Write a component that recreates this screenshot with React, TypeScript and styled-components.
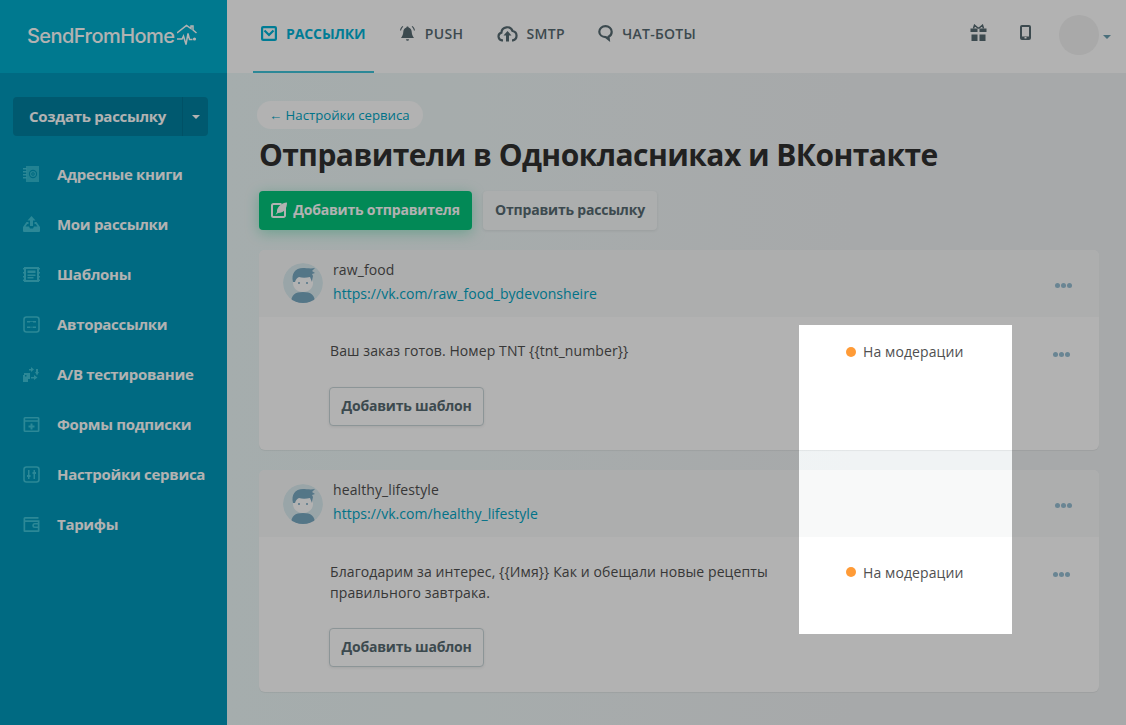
import React from "react";
import styled, { createGlobalStyle } from "styled-components";

const GlobalStyle = createGlobalStyle`
  html, body {
    margin: 0;
    height: 100%;
    overflow: hidden;
    background: #f0f3f4;
    font-family: "Open Sans", "Noto Sans", sans-serif;
  }
  * { box-sizing: border-box; }
`;

const SIDE_ICON = "#3fc3d8";
const NAV_ICON = "#576a71";

const MailIcon = () => (
  <svg width="16" height="15" viewBox="0 0 16 15" fill="none" stroke="#00b2d6" strokeWidth="2.200">
    <rect x="1.100" y="1.100" width="13.800" height="12.800" rx="1" />
    <path d="M3.500 4.500 8 9l4.500-4.500" />
  </svg>
);
const BellIcon = () => (
  <svg width="17" height="18" viewBox="0 0 17 18" fill={NAV_ICON}>
    <path d="M8.500 1.500c.8 0 1.100.5 1.100 1 2.200.6 3 2.400 3.100 4.300.1 2.500.8 4.300 2.300 6.200H2c1.500-1.900 2.200-3.700 2.300-6.200.1-1.900.9-3.700 3.100-4.300 0-.5.300-1 1.100-1z" />
    <path d="M7 14.300h3a1.500 1.500 0 0 1-3 0zM3.500 1l.8.700C3.100 2.800 2.300 4 2.100 5.600L1 5.500C1.200 3.700 2.100 2.100 3.500 1zM13.500 1l-.8.700c1.200 1.100 2 2.300 2.200 3.900l1.100-.1c-.2-1.800-1.100-3.400-2.500-4.500z" />
  </svg>
);
const CloudIcon = () => (
  <svg width="21" height="17" viewBox="0 0 21 17">
    <path fill="none" stroke={NAV_ICON} strokeWidth="2.200" d="M6 15.400H5a4 4 0 0 1-.6-7.800A5.800 5.800 0 0 1 15.600 6a4.800 4.800 0 0 1 .2 9.400H15" />
    <path fill={NAV_ICON} d="M10.500 6l4 4.500H12V16.500H9v-6H6.500z" />
  </svg>
);
const ChatIcon = () => (
  <svg width="15" height="17" viewBox="0 0 15 17">
    <path fill="none" stroke={NAV_ICON} strokeWidth="2.200" d="M7.500 1.200c3.400 0 6.200 2.400 6.200 5.500 0 2.300-1.200 4.100-3.200 5l.3 2.800-3-2.400C4 12 1.300 9.800 1.300 6.700c0-3.100 2.800-5.500 6.200-5.500z" />
  </svg>
);
const GiftIcon = () => (
  <svg width="17" height="17" viewBox="0 0 17 17" fill={NAV_ICON}>
    <path fill="none" stroke={NAV_ICON} strokeWidth="1.500" d="M8.500 4.500 4.500 1.200 3.500 4.500M8.500 4.500l4-3.300 1 3.300" />
    <path d="M.5 4.500h7v3.500h-7zM9.500 4.500h7v3.500h-7zM1.500 10.500h6V17h-6zM9.500 10.500h6V17h-6z" />
  </svg>
);
const PhoneIcon = () => (
  <svg width="11" height="15" viewBox="0 0 11 15">
    <path fill={NAV_ICON} fillRule="evenodd" d="M2 0h7a2 2 0 0 1 2 2v11a2 2 0 0 1-2 2H2a2 2 0 0 1-2-2V2a2 2 0 0 1 2-2zm0 2v9.500h7V2zm2.500 10v1.500h2V12z" />
  </svg>
);

const sideIcons: Record<string, React.ReactNode> = {
  book: (
    <>
      <path d="M3 0h13v16H3z" opacity=".8" />
      <path d="M0 2h4v1.500H0zM0 5h4v1.500H0zM0 8h4v1.500H0zM0 11h4v1.500H0z" />
      <circle cx="10" cy="8" r="3.600" fill="none" stroke="#0099ba" strokeWidth="1.100" />
      <circle cx="10" cy="8" r="1.300" fill="none" stroke="#0099ba" strokeWidth="1" />
    </>
  ),
  outbox: (
    <path d="M8.500 0l4 4.500H10V10H7V4.500H4.500zM3.500 6H5.500v2H4.300L2.500 10.500H6l1 2h3l1-2h3.500L12.700 8H11.500V6h2L17 11v4a1 1 0 0 1-1 1H1a1 1 0 0 1-1-1v-4z" />
  ),
  template: (
    <path fillRule="evenodd" d="M1 1h15v15H1zM3 3v11h11V3zM4.500 4.500h8V7h-8zM4.500 8.500h8V10h-8zM4.500 11h6v1.500h-6zM0 2h1v1.500H0zM0 6h1v1.500H0zM0 10h1v1.500H0zM0 13.500h1V15H0zM16 2h1v1.500h-1zM16 6h1v1.500h-1zM16 10h1v1.500h-1zM16 13.500h1V15h-1z" />
  ),
  auto: (
    <>
      <rect x="1" y="1" width="15" height="15" rx="2.500" fill="none" stroke={SIDE_ICON} strokeWidth="1.600" />
      <path d="M4 5h3v1.500H4zM10 5h3v1.500h-3zM4 10.500h3V12H4zM10 10.500h3V12h-3zM7 5.300h3v.8H7zM7 10.800h3v.8H7z" />
    </>
  ),
  ab: (
    <path d="M1 7h6v6H5v3H0V9h1zm1 2v1.500h1.500V9zM8 1l3 2.500L8 6V4.500H6V3h2zm4 5 4 0-2 3.500zM13 6V3h2v3zM8 11h3V9l3.500 2.500L11 14v-1.500H8z" />
  ),
  form: (
    <path fillRule="evenodd" d="M2 1h13a1.500 1.500 0 0 1 1.500 1.500v12A1.500 1.500 0 0 1 15 16H2a1.500 1.500 0 0 1-1.500-1.500v-12A1.500 1.500 0 0 1 2 1zm.2 1.600v1.600h12.600V2.600zm0 3.200v8.600h12.600V5.800zM7.500 7.500h2v2h2v2h-2v2h-2v-2h-2v-2h2z" />
  ),
  settings: (
    <>
      <rect x="1" y="1" width="15" height="15" rx="2.500" fill="none" stroke={SIDE_ICON} strokeWidth="1.600" />
      <path d="M5 4h1.500v9H5zM10.500 4H12v9h-1.500zM4 9h3.500v2H4zM9.500 6H13v2H9.500z" />
    </>
  ),
  wallet: (
    <path fillRule="evenodd" d="M2 1h13.500v1.700H2.200v1.600H16.500V15a1 1 0 0 1-1 1H1.500a1 1 0 0 1-1-1V2.500A1.500 1.500 0 0 1 2 1zm.2 5v8.300h12.600v-2.300h-3a2.500 2.500 0 0 1 0-5h3V6zm9.600 2.600a.9.900 0 0 0 0 1.800h3V8.600z" />
  ),
};

const menu = [
  { icon: "book", label: "Адресные книги" },
  { icon: "outbox", label: "Мои рассылки" },
  { icon: "template", label: "Шаблоны" },
  { icon: "auto", label: "Авторассылки" },
  { icon: "ab", label: "A/B тестирование" },
  { icon: "form", label: "Формы подписки" },
  { icon: "settings", label: "Настройки сервиса" },
  { icon: "wallet", label: "Тарифы" },
];

const senders = [
  {
    name: "raw_food",
    url: "https://vk.com/raw_food_bydevonsheire",
    text: "Ваш заказ готов. Номер TNT {{tnt_number}}",
  },
  {
    name: "healthy_lifestyle",
    url: "https://vk.com/healthy_lifestyle",
    text: "Благодарим за интерес, {{Имя}} Как и обещали новые рецепты правильного завтрака.",
  },
];

const SenderAvatar = () => (
  <svg width="40" height="40" viewBox="0 0 40 40">
    <clipPath id="avatar-clip"><circle cx="20" cy="20" r="20" /></clipPath>
    <g clipPath="url(#avatar-clip)">
      <circle cx="20" cy="20" r="20" fill="#dcedf1" />
      <path d="M8 40c0-8 4-11 12-11s12 3 12 11z" fill="#79a9c2" />
      <path d="M10 13h20v7c0 5-4 9-10 9s-10-4-10-9z" fill="#fff" />
      <path d="M10 19C8 11 12 5 20 5c3 0 8 1 12 0l-3 3 3 2-3 1 1 2-1 6-2-5c-4 1-8 1-11 0-2 1-3 2-4 5z" fill="#79a9c2" />
      <circle cx="16" cy="20" r="1" fill="#79a9c2" />
      <circle cx="24" cy="20" r="1" fill="#79a9c2" />
    </g>
  </svg>
);

const EditIcon = () => (
  <svg width="16" height="16" viewBox="0 0 16 16">
    <path fill="none" stroke="#fff" strokeWidth="2" d="M10.500 2H2.500A1.500 1.500 0 0 0 1 3.500v10A1.500 1.500 0 0 0 2.500 15h10a1.500 1.500 0 0 0 1.500-1.500V6" />
    <path fill="#fff" d="M16 .5c0 6-3 10.500-9 10.500l-2.500 2 1.500-3C5.500 5.500 10 1 16 .5z" />
  </svg>
);

const App: React.FC = () => {
  return (
    <Shell>
      <GlobalStyle />
      <Sidebar>
        <LogoBar>
          <LogoText>SendFromHome</LogoText>
          <svg width="20" height="23" viewBox="0 0 20 23" fill="none" stroke="#fff" strokeWidth="1.500">
            <path d="M0 9 9.500 1.500 14 4.500V2h2v4l3.500 3" />
            <path d="M0 15h5l1.500-3 2.500 8.500 2-11 1.500 6h3" />
            <circle cx="17.500" cy="15" r="1.600" fill="#fff" stroke="none" />
          </svg>
        </LogoBar>
        <SideBody>
          <CreateGroup>
            <CreateButton>Создать рассылку</CreateButton>
            <CreateCaret><Caret $color="#fff" /></CreateCaret>
          </CreateGroup>
          <SideMenu>
            {menu.map(item => (
              <SideItem key={item.label}>
                <svg width="17" height="17" viewBox="0 0 17 17" fill={SIDE_ICON}>
                  {sideIcons[item.icon]}
                </svg>
                {item.label}
              </SideItem>
            ))}
          </SideMenu>
        </SideBody>
      </Sidebar>

      <Main>
        <TopBar>
          <NavItem $active><MailIcon />РАССЫЛКИ</NavItem>
          <NavItem><BellIcon />PUSH</NavItem>
          <NavItem><CloudIcon />SMTP</NavItem>
          <NavItem><ChatIcon />ЧАТ-БОТЫ</NavItem>
          <TopRight>
            <GiftIcon />
            <PhoneIcon />
            <UserBox>
              <UserCircle />
              <UserCaret $color="#6a9fb0" />
            </UserBox>
          </TopRight>
        </TopBar>

        <Content>
          <BackLink>← Настройки сервиса</BackLink>
          <Title>Отправители в Однокласниках и ВКонтакте</Title>
          <Actions>
            <GreenButton><EditIcon />Добавить отправителя</GreenButton>
            <GreyButton>Отправить рассылку</GreyButton>
          </Actions>

          {senders.map(sender => (
            <Card key={sender.name}>
              <CardHeader>
                <SenderAvatar />
                <SenderInfo>
                  <SenderName>{sender.name}</SenderName>
                  <SenderLink>{sender.url}</SenderLink>
                </SenderInfo>
                <Dots />
              </CardHeader>
              <CardBody>
                <div>
                  <Message>{sender.text}</Message>
                  <OutlineButton>Добавить шаблон</OutlineButton>
                </div>
                <Status><StatusDot />На модерации</Status>
                <Dots $body />
              </CardBody>
            </Card>
          ))}
        </Content>
      </Main>

      <Spotlight />
    </Shell>
  );
};

const Shell = styled.div`
  position: relative;
  display: flex;
  width: 100%;
  height: 725px;
  overflow: hidden;
`;

const Sidebar = styled.aside`
  flex: 0 0 227px;
  display: flex;
  flex-direction: column;
  background: #0099ba;
`;

const LogoBar = styled.div`
  display: flex;
  align-items: center;
  gap: 3px;
  height: 73px;
  padding: 0 0 2px 27px;
  background: #00aecd;
`;

const LogoText = styled.span`
  font-family: "Inter", sans-serif;
  font-size: 20px;
  font-weight: 500;
  letter-spacing: -0.55px;
  color: #fff;
`;

const SideBody = styled.div`
  padding: 24px 19px 0 13px;
`;

const CreateGroup = styled.div`
  display: flex;
  width: 195px;
  height: 39px;
  border-radius: 4px;
  overflow: hidden;
  background: #00809f;
`;

const CreateButton = styled.div`
  flex: 1;
  display: flex;
  align-items: center;
  justify-content: center;
  padding-bottom: 2px;
  font-size: 15px;
  font-weight: 700;
  letter-spacing: -0.3px;
  color: #fff;
  border-right: 1px solid #007592;
`;

const CreateCaret = styled.div`
  flex: 0 0 25px;
  display: flex;
  align-items: center;
  justify-content: center;
`;

const Caret = styled.span<{ $color: string }>`
  width: 0;
  height: 0;
  border-left: 4px solid transparent;
  border-right: 4px solid transparent;
  border-top: 4px solid ${p => p.$color};
`;

const UserCaret = styled(Caret)`
  margin-top: 5px;
`;

const SideMenu = styled.nav`
  display: flex;
  flex-direction: column;
  margin-top: 13px;
  padding-left: 10px;
`;

const SideItem = styled.div`
  display: flex;
  align-items: center;
  gap: 17px;
  height: 50px;
  font-size: 15px;
  font-weight: 700;
  letter-spacing: -0.3px;
  color: #fff;
  white-space: nowrap;
`;

const Main = styled.div`
  flex: 1;
  min-width: 0;
  display: flex;
  flex-direction: column;
`;

const TopBar = styled.header`
  display: flex;
  align-items: stretch;
  gap: 17.3px;
  height: 73px;
  padding: 0 15px 0 26px;
  background: #fff;
`;

const NavItem = styled.div<{ $active?: boolean }>`
  display: flex;
  align-items: center;
  gap: 9px;
  padding: 0 8px 4px;
  font-size: 14px;
  font-weight: ${p => (p.$active ? 700 : 600)};
  letter-spacing: ${p => (p.$active ? "-0.1px" : "0.3px")};
  color: ${p => (p.$active ? "#00b2d6" : "#576a71")};
  border-bottom: 3px solid ${p => (p.$active ? "#3fc3d8" : "transparent")};
  margin-bottom: -1px;
`;

const TopRight = styled.div`
  display: flex;
  align-items: center;
  gap: 33px;
  margin-left: auto;
  padding-bottom: 4px;
  > svg {
    margin-bottom: 5px;
  }
`;

const UserBox = styled.div`
  display: flex;
  align-items: center;
  gap: 4px;
  margin-left: -5px;
`;

const UserCircle = styled.div`
  width: 40px;
  height: 40px;
  border-radius: 50%;
  background: #f2f2f2;
`;

const Content = styled.main`
  flex: 1;
  padding: 28px 27px 0 32px;
  background: linear-gradient(90deg, #edf8f8, #f0f3f4 70%);
`;

const BackLink = styled.a`
  display: inline-flex;
  align-items: center;
  height: 28px;
  margin-left: -2px;
  padding: 0 13px 0 12px;
  border-radius: 14px;
  background: #fff;
  font-size: 13.2px;
  color: #00a5c4;
`;

const Title = styled.h1`
  margin: 8px 0 18px;
  font-size: 30px;
  line-height: 36px;
  font-weight: 700;
  letter-spacing: -0.55px;
  color: #303030;
  white-space: nowrap;
`;

const Actions = styled.div`
  display: flex;
  gap: 11px;
  margin-bottom: 20px;
`;

const BaseButton = styled.button`
  display: inline-flex;
  align-items: center;
  justify-content: center;
  height: 39px;
  padding: 0 0 2px;
  border: none;
  border-radius: 4px;
  font-family: inherit;
  font-size: 14px;
  font-weight: 700;
  letter-spacing: -0.2px;
`;

const GreenButton = styled(BaseButton)`
  gap: 6px;
  width: 213px;
  background: #03c57b;
  color: #fff;
  box-shadow: 0 3px 14px rgba(3, 197, 123, 0.35);
`;

const GreyButton = styled(BaseButton)`
  width: 174px;
  background: #f6f9f9;
  color: #576a71;
  box-shadow: 0 1px 3px rgba(0, 0, 0, 0.08);
`;

const Card = styled.section`
  margin-bottom: 20px;
  border-radius: 6px;
  background: #fff;
  box-shadow: 0 1px 1px rgba(0, 0, 0, 0.06);
  overflow: hidden;
`;

const CardHeader = styled.div`
  display: flex;
  align-items: center;
  gap: 10px;
  height: 66.5px;
  padding: 0 27px 0 24px;
  background: #f8f9f9;
`;

const SenderInfo = styled.div`
  flex: 1;
  margin-top: -3px;
`;

const SenderName = styled.div`
  font-size: 14px;
  line-height: 24px;
  letter-spacing: 0.1px;
  color: #505050;
`;

const SenderLink = styled.a`
  font-size: 14px;
  line-height: 24px;
  letter-spacing: 0.05px;
  color: #00a5c4;
`;

const Dots = styled.span<{ $body?: boolean }>`
  position: relative;
  width: 5px;
  height: 5px;
  margin: ${p => (p.$body ? "11.6px 0 0 6px" : "4px 6px 0")};
  border-radius: 50%;
  background: #97bfd3;
  &::before, &::after {
    content: "";
    position: absolute;
    top: 0;
    width: 5px;
    height: 5px;
    border-radius: 50%;
    background: #97bfd3;
  }
  &::before { left: -6px; }
  &::after { left: 6px; }
`;

const CardBody = styled.div`
  display: grid;
  grid-template-columns: 516px 207px 1fr;
  align-items: start;
  padding: 23.9px 0 24.5px 71px;
`;

const Message = styled.p`
  margin: 0 0 25.6px;
  max-width: 460px;
  font-size: 14px;
  line-height: 21px;
  letter-spacing: 0.1px;
  color: #505050;
`;

const OutlineButton = styled(BaseButton)`
  width: 155px;
  margin-left: -1px;
  background: #fff;
  color: #576a71;
  border: 1px solid #c9d6d9;
  box-shadow: 0 1px 3px rgba(0, 0, 0, 0.08);
`;

const Status = styled.div`
  display: flex;
  align-items: center;
  gap: 7px;
  margin-top: 1px;
  font-size: 14px;
  line-height: 21px;
  letter-spacing: 0.1px;
  color: #505050;
`;

const StatusDot = styled.span`
  width: 10px;
  height: 10px;
  border-radius: 50%;
  background: #ff9b37;
`;

const Spotlight = styled.div`
  position: absolute;
  left: 799px;
  top: 325px;
  width: 213px;
  height: 309px;
  box-shadow: 0 0 0 2000px rgba(0, 0, 0, 0.3);
  pointer-events: none;
`;

export default App;
